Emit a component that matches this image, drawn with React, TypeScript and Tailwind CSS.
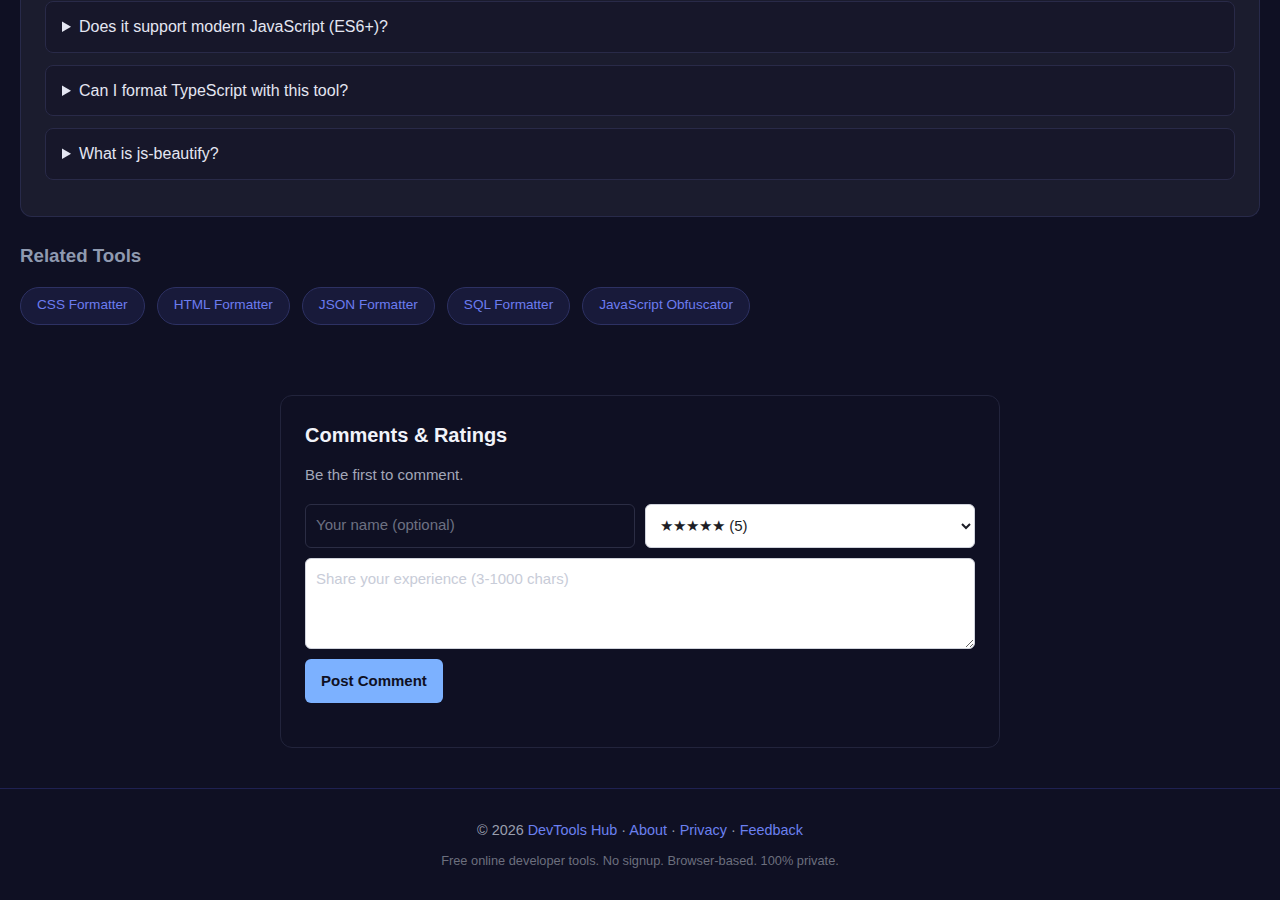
import React from 'react';

const FAQS = [
  'Does it support modern JavaScript (ES6+)?',
  'Can I format TypeScript with this tool?',
  'What is js-beautify?',
];

const RELATED = ['CSS Formatter', 'HTML Formatter', 'JSON Formatter', 'SQL Formatter', 'JavaScript Obfuscator'];

const FaqItem = ({ q }: { q: string }) => (
  <details className="mb-3 rounded-lg border border-[#292a48] bg-[#17172a]">
    <summary className="cursor-pointer px-4 py-4 text-[16px] leading-[17.5px] text-[#e4e6f2]">{q}</summary>
  </details>
);

const Comments = () => {
  const [rating, setRating] = React.useState('5');
  return (
    <section className="mx-auto w-[720px] rounded-xl border border-[#22243c] bg-[#0f1023] px-6 pt-6 pb-[44px]">
      <h3 className="text-[20px] font-bold leading-[30px] text-[#f1f3fa]">Comments &amp; Ratings</h3>
      <p className="mt-[15px] text-[15px] leading-[20px] text-[#a3a7b8]">Be the first to comment.</p>
      <div className="mt-[19px] flex gap-[10px]">
        <input
          placeholder="Your name (optional)"
          className="h-[44px] flex-1 rounded-md border border-[#2b2d44] bg-transparent px-[10px] pb-[2px] text-[15px] text-[#e4e6f2] outline-none placeholder:text-[#6d7182]"
        />
        <select
          value={rating}
          onChange={e => setRating(e.target.value)}
          className="h-[44px] flex-1 rounded-md border border-[#d0d3dc] bg-white px-[10px] text-[15px] text-[#1c1d26] outline-none"
          style={{ appearance: 'auto' }}
        >
          <option value="5">★★★★★ (5)</option>
          <option value="4">★★★★☆ (4)</option>
          <option value="3">★★★☆☆ (3)</option>
          <option value="2">★★☆☆☆ (2)</option>
          <option value="1">★☆☆☆☆ (1)</option>
        </select>
      </div>
      <textarea
        placeholder="Share your experience (3-1000 chars)"
        className="mt-[10px] block h-[91px] w-full resize-y rounded-md border border-[#d0d3dc] bg-white px-[10px] py-[9px] text-[15px] leading-[22px] text-[#1c1d26] outline-none placeholder:text-[#c8ccd8]"
      />
      <button className="mt-[10px] h-[44px] rounded-md bg-[#7cb1ff] px-4 pt-[2px] text-[15px] font-bold text-[#0f1023]">
        Post Comment
      </button>
    </section>
  );
};

export default function App() {
  return (
    <div className="min-h-screen bg-[#0f1023] font-['Liberation_Sans',Arial,sans-serif]">
      <div className="px-5">
        <div className="rounded-b-xl border-x border-b border-[#282a4a] bg-[#1b1c2e] px-6 pt-[1px] pb-6">
          {FAQS.map(q => <FaqItem key={q} q={q} />)}
        </div>

        <h2 className="mt-[25px] text-[18.72px] font-bold leading-[28px] text-[#8f9ab0]">Related Tools</h2>
        <div className="mt-[17px] flex flex-wrap gap-3">
          {RELATED.map(t => (
            <a
              key={t}
              href="#"
              className="flex h-[38px] items-center rounded-full border border-[#2d3163] bg-[#181a3a] px-4 text-[13.6px] text-[#6c7cf0]"
            >
              {t}
            </a>
          ))}
        </div>
      </div>

      <div className="mt-[70px]">
        <Comments />
      </div>

      <footer className="mt-10 border-t border-[#1f2152] pt-[31px] pb-[32px] text-center">
        <p className="text-[14.4px] leading-[20px] text-[#9a9eae]">
          © 2026 <a href="#" className="text-[#6b80f0]">DevTools Hub</a> · <a href="#" className="text-[#6b80f0]">About</a> ·{' '}
          <a href="#" className="text-[#6b80f0]">Privacy</a> · <a href="#" className="text-[#6b80f0]">Feedback</a>
        </p>
        <p className="mt-[12px] text-[12.8px] leading-[18px] text-[#6c6f7e]">
          Free online developer tools. No signup. Browser-based. 100% private.
        </p>
      </footer>
    </div>
  );
}
